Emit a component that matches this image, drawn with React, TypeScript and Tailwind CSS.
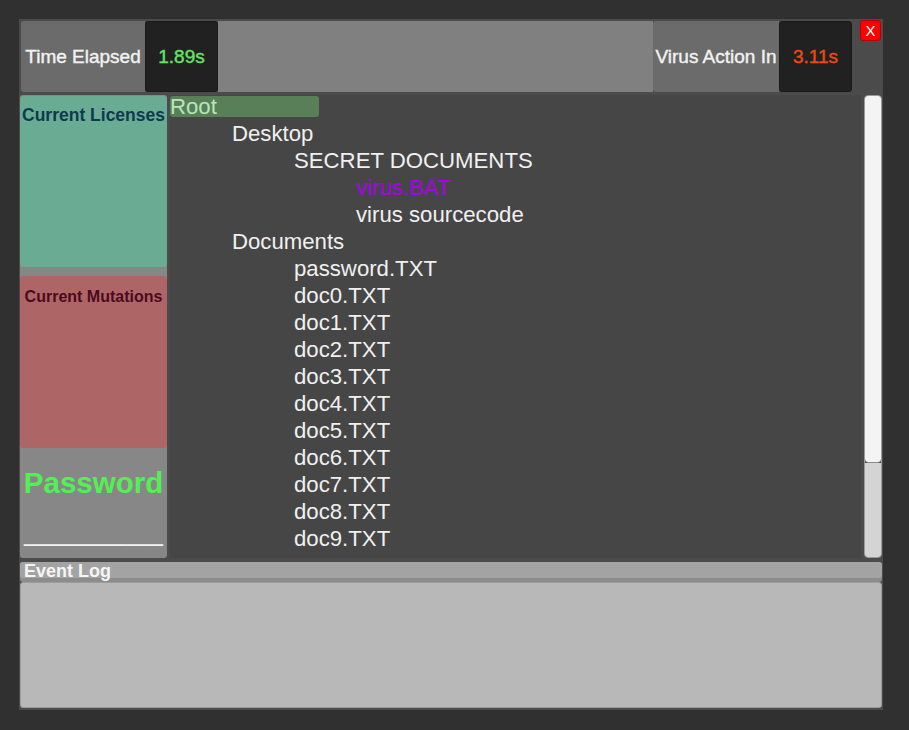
import React from 'react';

type Node = { name: string; depth: number; kind?: 'root' | 'virus' };

const tree: Node[] = [
  { name: 'Root', depth: 0, kind: 'root' },
  { name: 'Desktop', depth: 1 },
  { name: 'SECRET DOCUMENTS', depth: 2 },
  { name: 'virus.BAT', depth: 3, kind: 'virus' },
  { name: 'virus sourcecode', depth: 3 },
  { name: 'Documents', depth: 1 },
  { name: 'password.TXT', depth: 2 },
  ...Array.from({ length: 10 }, (_, i) => ({ name: `doc${i}.TXT`, depth: 2 })),
];

function TimerCell({ label, value, valueColor, width }: { label: string; value: string; valueColor: string; width: string }) {
  return (
    <>
      <div className={`${width} h-full bg-[#6b6b6b] rounded-l-[3px] flex items-center justify-center pt-[1px]`}>
        <span className="text-[19px] text-[#f2f2f2] whitespace-nowrap [-webkit-text-stroke:0.4px_#f2f2f2]">{label}</span>
      </div>
      <div className="w-[73px] h-full bg-[#212121] rounded-[3px] border border-[#1a1a1a] flex items-center justify-center pt-[1px]">
        <span className={`text-[19px] ${valueColor} [-webkit-text-stroke:0.4px_currentColor]`}>{value}</span>
      </div>
    </>
  );
}

export default function App() {
  return (
    <div className="min-h-[730px] bg-[#303030] pt-[19px] pl-[19px] font-['Liberation_Sans',Arial,sans-serif]">
      <div className="w-[864px] h-[691px] bg-[#4b4b4b] flex flex-col px-[1px] pt-[2px] pb-[2px]">
        {/* top bar */}
        <div className="flex h-[71px] pl-[1px]">
          <TimerCell label="Time Elapsed" value="1.89s" valueColor="text-[#66e366]" width="w-[124px]" />
          <div className="w-[435px] h-full bg-[#808080]" />
          <TimerCell label="Virus Action In" value="3.11s" valueColor="text-[#f04a10]" width="w-[126px]" />
          <div className="ml-[8px] -mt-[1px] w-[21px] h-[21px] bg-[#ff0000] border border-[#b80000] rounded-[3px] flex items-center justify-center">
            <span className="text-[15px] leading-none text-white">X</span>
          </div>
        </div>

        {/* main area */}
        <div className="flex h-[463px] mt-[3px] gap-[3px]">
          <div className="w-[147px] h-full bg-[#878787] rounded-[3px] flex flex-col pt-[1px]">
            <div className="h-[171px] bg-[#6aab94] rounded-[3px] pt-[8px] text-center">
              <span className="text-[17.5px] font-bold leading-[20px] text-[#0d3b4e] whitespace-nowrap">Current Licenses</span>
            </div>
            <div className="h-[172px] mt-[9px] bg-[#ae6565] rounded-[3px] pt-[9px] text-center">
              <span className="text-[16px] font-bold leading-[18px] text-[#4a0b1f] whitespace-nowrap">Current Mutations</span>
            </div>
            <div className="flex-1 flex flex-col items-center pt-[20px]">
              <span className="text-[29.5px] font-bold leading-[29px] text-[#55ee55]">Password</span>
              <span className="mt-[25px] text-[25px] leading-[20px] text-[#f2f2f2]">__________</span>
            </div>
          </div>

          <div className="w-[691px] h-full bg-[#464646] pt-[1px] overflow-hidden">
            {tree.map((n) => (
              <div key={n.name} className="h-[27px]" style={{ paddingLeft: n.depth * 62 }}>
                {n.kind === 'root' ? (
                  <div className="w-[149px] h-[21px] bg-[#587f58] rounded-[3px] text-[22.2px] leading-[21px] text-[#b8e6b8]">{n.name}</div>
                ) : (
                  <div className={`text-[22.2px] leading-[21px] whitespace-nowrap ${n.kind === 'virus' ? 'text-[#aa00ee]' : 'text-[#f0f0f0]'}`}>
                    {n.name}
                  </div>
                )}
              </div>
            ))}
          </div>

          <div className="w-[18px] h-full flex flex-col rounded-[4px] overflow-hidden border border-[#9a9a9a]">
            <div className="h-[367px] bg-[#f4f4f4] rounded-b-[4px] border-b border-[#8a8a8a]" />
            <div className="flex-1 bg-[#d4d4d4]" />
          </div>
        </div>

        {/* event log */}
        <div className="mt-[4px] bg-[#8c8c8c] rounded-[3px] pb-[4px]">
          <div className="h-[16px] bg-[#a3a3a3] rounded-[3px] pl-[4px] text-[18px] font-bold leading-[18px] text-[#f5f5f5]">
            Event Log
          </div>
        </div>
        <div className="h-[126px] bg-[#b8b8b8] rounded-[3px] border border-[#9c9c9c]" />
      </div>
    </div>
  );
}
